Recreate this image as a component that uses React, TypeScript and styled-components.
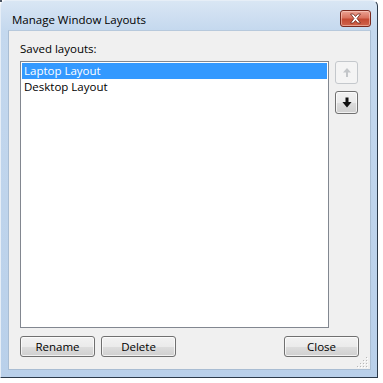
import React from "react";
import styled, { createGlobalStyle } from "styled-components";

const Global = createGlobalStyle`
  html, body { margin: 0; padding: 0; background: #ffffff; }
  body { font-family: "Segoe UI", "Open Sans", "Noto Sans", sans-serif; font-size: 11.5px; color: #000; }
`;

const Window = styled.div`
  position: relative;
  width: 378px;
  height: 378px;
  box-sizing: border-box;
  border-right: 1px solid #2b3a4a;
  border-bottom: 1px solid #2b3a4a;
  border-top: 1px solid #e6eef7;
  border-left: 1px solid #e6eef7;
  border-top-right-radius: 6px;
  border-top-left-radius: 6px;
  background: linear-gradient(180deg, #d9e6f4 0px, #c4d8ee 30px, #b9d0ea 100%);
  display: flex;
  flex-direction: column;
`;

const Corner = styled.div`
  position: absolute;
  left: -1px;
  top: -1px;
  width: 2px;
  height: 2px;
  background: #4a5563;
`;

const TitleBar = styled.div`
  height: 29px;
  display: flex;
  align-items: flex-start;
  justify-content: space-between;
  padding: 0 6px 0 11px;
`;

const TitleText = styled.div`
  font-size: 11.5px;
  line-height: 16px;
  margin-top: 11px;
  color: #000;
`;

const CloseBtn = styled.div`
  margin-top: 9px;
  width: 31px;
  height: 17px;
  box-sizing: border-box;
  border: 1px solid #7a2a1f;
  border-radius: 3px;
  background: linear-gradient(180deg, #eba394 0%, #d9735f 45%, #c44a33 55%, #d0644c 100%);
  display: flex;
  align-items: center;
  justify-content: center;
  box-shadow: inset 0 0 0 1px rgba(255, 220, 210, 0.5);
`;

const Client = styled.div`
  position: relative;
  flex: 1;
  margin: 0 6px 7px 7px;
  background: #f0f0f0;
  border: 1px solid #a9bdd3;
  border-top-color: #b7c9dc;
  padding: 10px 11px 12px 11px;
  display: flex;
  flex-direction: column;
`;

const Label = styled.div`
  line-height: 16px;
  height: 16px;
  margin-bottom: 4px;
`;

const MainRow = styled.div`
  flex: 1;
  display: flex;
  gap: 6px;
  min-height: 0;
`;

const ListBox = styled.div`
  flex: 0 0 309px;
  box-sizing: border-box;
  background: #fff;
  border: 1px solid #828790;
  padding: 1px;
`;

const Item = styled.div<{ $selected?: boolean }>`
  height: 16px;
  line-height: 15px;
  padding-left: 2px;
  background: ${(p) => (p.$selected ? "#3399ff" : "transparent")};
  color: ${(p) => (p.$selected ? "#fff" : "#000")};
  white-space: nowrap;
  overflow: hidden;
`;

const SideCol = styled.div`
  display: flex;
  flex-direction: column;
  gap: 7px;
`;

const IconBtn = styled.div<{ $disabled?: boolean }>`
  width: 23px;
  height: 23px;
  box-sizing: border-box;
  border-radius: 3px;
  border: 1px solid ${(p) => (p.$disabled ? "#c4c8cc" : "#707070")};
  background: ${(p) =>
    p.$disabled
      ? "#f4f4f4"
      : "linear-gradient(180deg, #f2f2f2 0%, #ebebeb 50%, #dddddd 51%, #cfcfcf 100%)"};
  box-shadow: inset 0 0 0 1px ${(p) => (p.$disabled ? "transparent" : "rgba(255,255,255,0.7)")};
  display: flex;
  align-items: center;
  justify-content: center;
`;

const BottomRow = styled.div`
  display: flex;
  align-items: center;
  gap: 6px;
  margin-top: 8px;
`;

const Spacer = styled.div`
  flex: 1;
`;

const Button = styled.div`
  width: 75px;
  height: 21px;
  box-sizing: border-box;
  border: 1px solid #707070;
  border-radius: 3px;
  background: linear-gradient(180deg, #f2f2f2 0%, #ebebeb 50%, #dddddd 51%, #cfcfcf 100%);
  box-shadow: inset 0 0 0 1px rgba(255, 255, 255, 0.7);
  display: flex;
  align-items: center;
  justify-content: center;
  line-height: 16px;
`;

const Grip = styled.div`
  position: absolute;
  right: 1px;
  bottom: 1px;
  width: 12px;
  height: 12px;
  display: flex;
`;

function UpArrow() {
  return (
    <svg width="10" height="11" viewBox="0 0 10 11">
      <path d="M5 1 L9 5.5 L6 5.5 L6 10 L4 10 L4 5.5 L1 5.5 Z" fill="#c3c6c9" />
    </svg>
  );
}

function DownArrow() {
  return (
    <svg width="10" height="11" viewBox="0 0 10 11">
      <path d="M3.5 0.5 L6.5 0.5 L6.5 5 L9.6 5 L5 10.5 L0.4 5 L3.5 5 Z" fill="#111" />
    </svg>
  );
}

function CloseX() {
  return (
    <svg width="13" height="11" viewBox="0 0 13 11">
      <path
        d="M1.5 1 L4.3 1 L6.5 3.5 L8.7 1 L11.5 1 L8 5.5 L11.5 10 L8.7 10 L6.5 7.5 L4.3 10 L1.5 10 L5 5.5 Z"
        fill="#ffffff"
        stroke="#6b2318"
        strokeWidth="0.8"
      />
    </svg>
  );
}

function GripDots() {
  const dots: [number, number][] = [
    [9, 1],
    [6, 4], [9, 4],
    [3, 7], [6, 7], [9, 7],
    [0, 10], [3, 10], [6, 10], [9, 10],
  ];
  return (
    <svg width="12" height="12" viewBox="0 0 12 12">
      {dots.map(([x, y], i) => (
        <g key={i}>
          <rect x={x + 1} y={y + 1} width="1" height="1" fill="#ffffff" />
          <rect x={x} y={y} width="1" height="1" fill="#b8b8b8" />
        </g>
      ))}
    </svg>
  );
}

export default function App() {
  return (
    <>
      <Global />
      <Window>
        <Corner />
        <TitleBar>
          <TitleText>Manage Window Layouts</TitleText>
          <CloseBtn>
            <CloseX />
          </CloseBtn>
        </TitleBar>
        <Client>
          <Label>Saved layouts:</Label>
          <MainRow>
            <ListBox>
              <Item $selected>Laptop Layout</Item>
              <Item>Desktop Layout</Item>
            </ListBox>
            <SideCol>
              <IconBtn $disabled>
                <UpArrow />
              </IconBtn>
              <IconBtn>
                <DownArrow />
              </IconBtn>
            </SideCol>
          </MainRow>
          <BottomRow>
            <Button>Rename</Button>
            <Button>Delete</Button>
            <Spacer />
            <Button>Close</Button>
          </BottomRow>
          <Grip>
            <GripDots />
          </Grip>
        </Client>
      </Window>
    </>
  );
}
